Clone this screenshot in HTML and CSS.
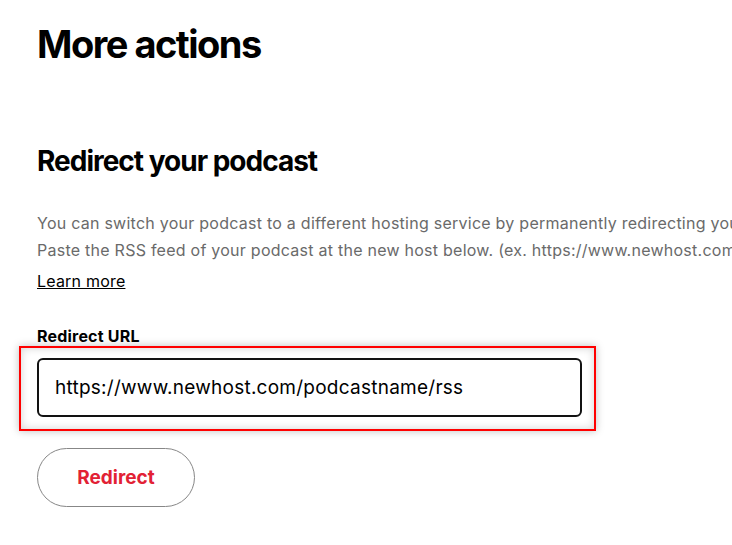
FILE: index.html
```html
<!DOCTYPE html>
<html lang="en">
<head>
  <meta charset="UTF-8" />
  <meta name="viewport" content="width=device-width, initial-scale=1" />
  <title>More actions</title>
  <link rel="stylesheet" href="styles.css">
</head>
<body>
  <main class="page">
    <h1 class="page-title">More actions</h1>

    <section class="redirect">
      <h2>Redirect your podcast</h2>
      <p class="intro">
        You can switch your podcast to a different hosting service by permanently redirecting your RSS feed.<br>
        Paste the RSS feed of your podcast at the new host below. (ex. https://www.newhost.com/podcastname/rss)
      </p>
      <div class="learn"><a href="#">Learn more</a></div>

      <form id="redirectForm">
        <label for="redirectUrl">Redirect URL</label>
        <div class="highlight">
          <input type="text" id="redirectUrl" name="redirectUrl" value="https://www.newhost.com/podcastname/rss" />
        </div>
        <button type="submit" class="btn-outline">Redirect</button>
      </form>
    </section>
  </main>
</body>
</html>
```

FILE: styles.css
```css
body {
  margin: 0;
  font-family: Inter, 'Noto Sans', sans-serif;
  background: #fff;
  color: #000;
  overflow: hidden;
}
.page {
  width: 1000px;
  padding: 21px 37px 0;
}
.page-title {
  margin: 0;
  font-size: 38px;
  line-height: 46px;
  font-weight: 700;
  letter-spacing: -1.5px;
}
.redirect h2 {
  margin: 77px 0 0;
  font-size: 28px;
  line-height: 34px;
  font-weight: 700;
  letter-spacing: -1px;
}
.intro {
  margin: 32px 0 0;
  font-size: 16px;
  line-height: 27px;
  color: #6a6a6a;
  letter-spacing: 0.25px;
  white-space: nowrap;
}
.learn {
  margin-top: 4px;
  font-size: 16px;
  line-height: 27px;
  letter-spacing: 0.2px;
}
.learn a {
  color: #000;
  text-decoration: underline;
}
label {
  display: block;
  margin-top: 31px;
  font-size: 16px;
  line-height: 20px;
  font-weight: 700;
  letter-spacing: 0.2px;
}
.highlight {
  width: 545px;
  margin-left: -18px;
  padding: 10px 12px 12px 16px;
  border: 2px solid #f00;
  box-shadow: 0 0 8px rgba(0,0,0,0.25), inset 0 0 8px rgba(0,0,0,0.18);
}
input {
  display: block;
  width: 545px;
  height: 59px;
  padding: 0 16px;
  border: 2px solid #121212;
  border-radius: 6px;
  font-family: inherit;
  font-size: 19px;
  letter-spacing: 0.25px;
  color: #000;
  background: #fff;
  box-sizing: border-box;
  outline: none;
}
.btn-outline {
  display: block;
  margin-top: 17px;
  width: 158px;
  height: 59px;
  border: 1px solid #878787;
  border-radius: 500px;
  background: #fff;
  color: #e22134;
  font-family: inherit;
  font-size: 19px;
  font-weight: 700;
  cursor: pointer;
}
```
